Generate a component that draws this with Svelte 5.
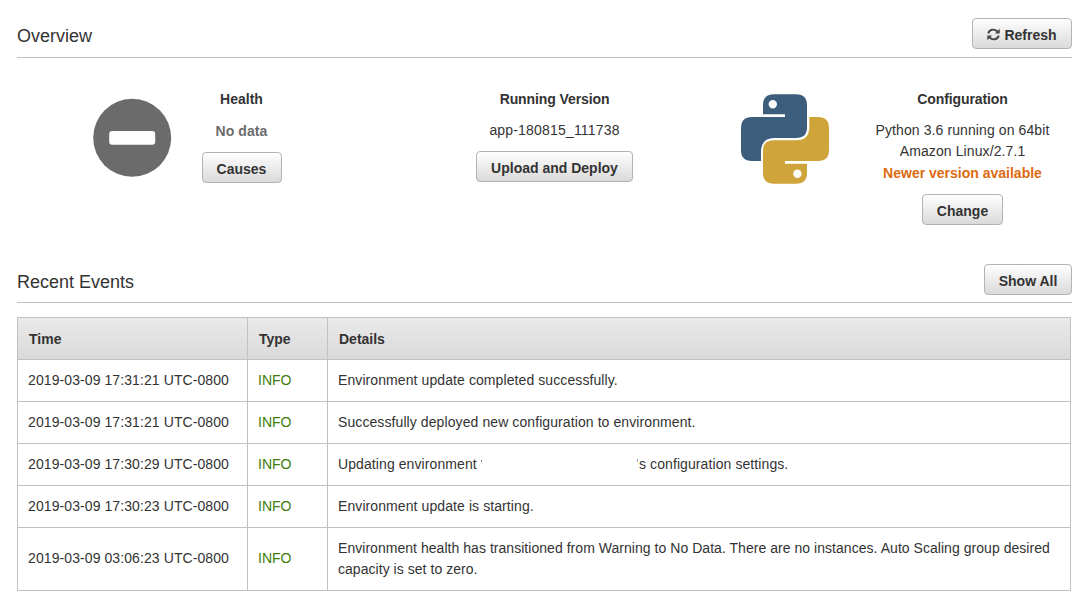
<script>
  const events = [
    { time: '2019-03-09 17:31:21 UTC-0800', type: 'INFO', details: 'Environment update completed successfully.' },
    { time: '2019-03-09 17:31:21 UTC-0800', type: 'INFO', details: 'Successfully deployed new configuration to environment.' },
    { time: '2019-03-09 17:30:29 UTC-0800', type: 'INFO', details: 'Updating environment', suffix: 's configuration settings.' },
    { time: '2019-03-09 17:30:23 UTC-0800', type: 'INFO', details: 'Environment update is starting.' },
    { time: '2019-03-09 03:06:23 UTC-0800', type: 'INFO', details: 'Environment health has transitioned from Warning to No Data. There are no instances. Auto Scaling group desired capacity is set to zero.', long: true }
  ];
</script>

<main>
  <header class="bar first">
    <h2>Overview</h2>
    <button class="refresh">
      <svg width="13" height="13" viewBox="0 0 13 13" fill="none" stroke="#444" stroke-width="1.9">
        <path d="M1.300 5.500C2.200 1.100 7.500 .4 10.500 3.600" />
        <path d="M11.700 7.500C10.800 11.900 5.500 12.600 2.500 9.400" />
        <path fill="#444" stroke="none" d="M12.700 .8V5.600H7.900ZM.3 12.200V7.400H5.100Z" />
      </svg>
      <span>Refresh</span>
    </button>
  </header>

  <section class="overview">
    <svg class="status" width="80" height="80" viewBox="0 0 80 80">
      <circle cx="40.2" cy="39.8" r="39" fill="#6b6b6b" />
      <rect x="17.200" y="33" width="46" height="13.700" rx="3" fill="#fff" />
    </svg>
    <div class="card health">
      <h3>Health</h3>
      <p class="nodata">No data</p>
      <button>Causes</button>
    </div>
    <div class="card version">
      <h3>Running Version</h3>
      <p>app-180815_111738</p>
      <button>Upload and Deploy</button>
    </div>
    <svg class="python" width="100" height="100" viewBox="0 0 100 100">
      <path fill="#3d5d7c" fill-rule="evenodd" d="M28 26.300V17Q28 6.300 39 6.300H61Q72 6.300 72 17V39.500Q72 50 61 50H39.500Q26 50 26 64V73H17Q6 73 6 62V40Q6 29 17 29H50V26.300ZM42 16.300A4.200 4.200 0 1 0 33.600 16.300A4.200 4.200 0 1 0 42 16.300Z" />
      <path fill="#cfa43a" fill-rule="evenodd" d="M74.300 29H83Q94 29 94 40V62Q94 73 83 73H50V75.700H72V85Q72 95.700 61 95.700H39Q28 95.700 28 85V62.500Q28 52.300 39 52.300H61Q74.300 52.300 74.300 39ZM66.600 85.700A4.200 4.200 0 1 0 58.200 85.700A4.200 4.200 0 1 0 66.600 85.700Z" />
    </svg>
    <div class="card config">
      <h3>Configuration</h3>
      <p>Python 3.6 running on 64bit<br />Amazon Linux/2.7.1</p>
      <p class="newer">Newer version available</p>
      <button>Change</button>
    </div>
  </section>

  <header class="bar">
    <h2>Recent Events</h2>
    <button class="showall">Show All</button>
  </header>

  <table>
    <colgroup><col class="c1" /><col class="c2" /><col /></colgroup>
    <thead><tr><th>Time</th><th>Type</th><th>Details</th></tr></thead>
    <tbody>
      {#each events as e}
        <tr class:long={e.long}>
          <td class="time">{e.time}</td>
          <td class="info">{e.type}</td>
          <td class="details">{#if e.suffix}<span class="name"><span>{e.details}</span><i class="tick"></i></span><i class="quote"></i><span>{e.suffix}</span>{:else}{e.details}{/if}</td>
        </tr>
      {/each}
    </tbody>
  </table>
</main>

<style>
  :global(body) { margin: 0; background: #fff; }
  main {
    width: 1055px;
    padding-left: 17px;
    height: 610px;
    font: 14px/21px "Liberation Sans", Arial, sans-serif;
    color: #333;
  }
  .bar {
    box-sizing: border-box;
    height: 45px;
    padding-top: 6px;
    display: flex;
    justify-content: space-between;
    align-items: flex-start;
    border-bottom: 1px solid #c1c1c1;
  }
  .bar.first { height: 58px; padding-top: 18px; }
  h2 { margin: 8px 0 0; font-size: 18px; line-height: 21px; font-weight: 400; }
  button {
    box-sizing: border-box;
    height: 31px;
    padding: 3px 0 0;
    border: 1px solid #b3b3b3;
    border-radius: 4px;
    background: linear-gradient(#fefefe, #dadada);
    font: bold 14px/21px "Liberation Sans", Arial, sans-serif;
    color: #333;
    display: flex;
    align-items: center;
    justify-content: center;
    white-space: nowrap;
  }
  .refresh { width: 100px; gap: 4px; }
  .refresh svg { margin-top: -1px; }
  .showall { width: 88px; }
  .overview {
    height: 200px;
    box-sizing: border-box;
    padding-top: 31px;
    display: grid;
    grid-template-columns: 75px 80px 139px 367px 57px 100px 255px;
    align-items: start;
  }
  .status { grid-column: 2; margin-top: 9px; }
  .card { display: flex; flex-direction: column; align-items: center; text-align: center; }
  .health { grid-column: 3; }
  .version { grid-column: 4; width: 487px; }
  .python { grid-column: 6; margin-top: -1px; }
  .config { grid-column: 7; }
  h3 { margin: 0; font-size: 14px; line-height: 21px; }
  .version h3, .config h3 { letter-spacing: -0.1px; }
  p { margin: 10px 0; white-space: nowrap; letter-spacing: 0.1px; }
  .version p { letter-spacing: 0.18px; }
  .nodata { font-weight: 700; color: #6b6b6b; margin: 11px 0 10px; }
  .newer { margin: -9px 0 10px; font-weight: 700; color: #dd6b10; letter-spacing: 0; }
  .health button { width: 80px; }
  .version button { width: 157px; }
  .config button { width: 81px; }
  table {
    width: 1054px;
    margin-top: 14px;
    border-collapse: collapse;
    table-layout: fixed;
  }
  .c1 { width: 230px; }
  .c2 { width: 80px; }
  th, td { border: 1px solid #c1c1c1; padding: 10px; height: 21px; text-align: left; }
  th { padding: 11px 10px 9px 11px; }
  thead tr { background: linear-gradient(#eaeaea, #d9d9d9); }
  .time { letter-spacing: 0.09px; }
  .details { letter-spacing: 0.09px; }
  .long .details { letter-spacing: 0.04px; }
  .long .time, .long .info { padding: 9px 10px 11px; }
  .info { color: #3d7d0b; }
  .name { display: inline-flex; width: 299px; gap: 4px; }
  .tick, .quote { display: inline-block; width: 1px; height: 3px; margin-top: 6px; background: #777; }
  .tick { height: 2px; }
  .quote { vertical-align: 7px; margin: 0 1px 0 0; background: #9aa7b5; }
</style>
